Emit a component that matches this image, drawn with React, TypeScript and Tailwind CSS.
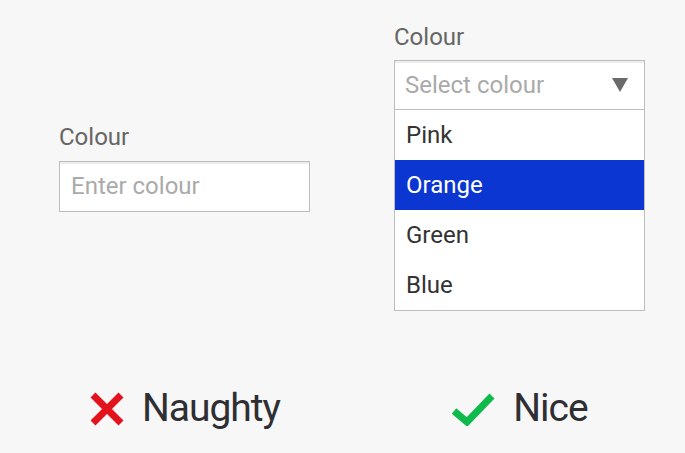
const options = ["Pink", "Orange", "Green", "Blue"]

export default function App() {
  return (
    <div
      className="w-[685px] h-[453px] bg-[#f7f7f7] text-[#333] overflow-hidden"
      style={{ fontFamily: "Roboto, 'Liberation Sans', sans-serif" }}
    >
      <div className="flex items-center h-[330px] pl-[59px] pt-[4px]">
        {/* Naughty: plain text input */}
        <div className="w-[251px]">
          <div className="text-[24px] leading-[28px] text-[#666] mb-[10px]">Colour</div>
          <div className="h-[51px] border border-[#bdbdbd] bg-white shadow-[inset_0_2px_0_#ececec] flex items-center px-[11px] text-[24px] text-[#aaa]">
            Enter colour
          </div>
        </div>

        {/* Nice: select with open listbox */}
        <div className="w-[251px] ml-[84px]">
          <div className="text-[24px] leading-[28px] text-[#666] mb-[9px]">Colour</div>
          <div className="border border-[#bdbdbd] bg-white">
            <div className="h-[49px] border-b border-[#bdbdbd] shadow-[inset_0_2px_0_#ececec] flex items-center justify-between pl-[10px] pr-[16px] text-[24px] text-[#aaa]">
              <span>Select colour</span>
              <svg width="16" height="14" viewBox="0 0 16 14">
                <path d="M0 0 H16 L8 14 Z" fill="#6b6b6b" />
              </svg>
            </div>
            {options.map((o) => (
              <div
                key={o}
                className={
                  o === "Orange"
                    ? "h-[50px] flex items-center px-[11px] text-[24px] bg-[#0b36d1] text-white"
                    : "h-[50px] flex items-center px-[11px] text-[24px] text-[#333]"
                }
              >
                {o}
              </div>
            ))}
          </div>
        </div>
      </div>

      <div className="flex pl-[59px] mt-[59px]">
        <div className="w-[251px] flex items-center justify-center gap-[17px]">
          <svg width="36" height="36" viewBox="0 0 36 36">
            <path d="M4 4 L32 32 M32 4 L4 32" stroke="#e3131d" strokeWidth="7" />
          </svg>
          <span className="text-[39px] leading-none tracking-[-1px] text-[#2e2e33]">Naughty</span>
        </div>
        <div className="w-[251px] ml-[84px] flex items-center justify-center gap-[18px]">
          <svg width="44" height="34" viewBox="0 0 44 34">
            <path d="M3 19 L16 30 L41 4" stroke="#0dba4b" strokeWidth="7" fill="none" />
          </svg>
          <span className="text-[39px] leading-none tracking-[-1px] text-[#2e2e33]">Nice</span>
        </div>
      </div>
    </div>
  )
}
